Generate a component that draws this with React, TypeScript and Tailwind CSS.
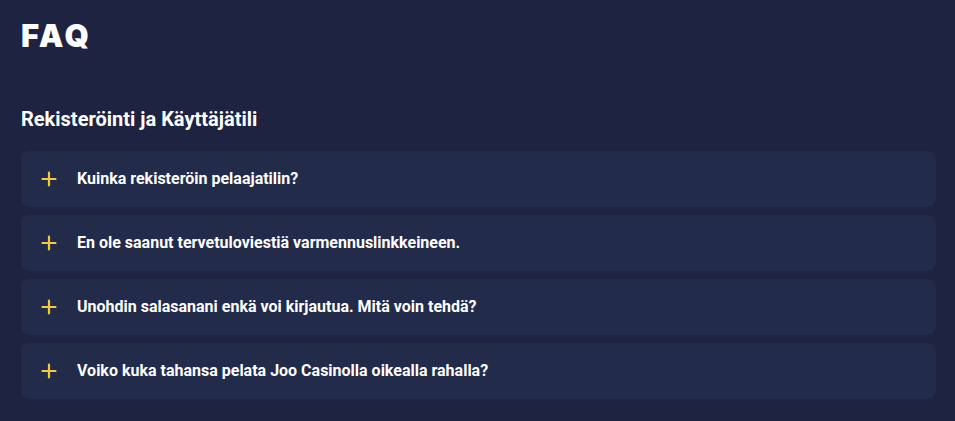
const questions = [
  "Kuinka rekisteröin pelaajatilin?",
  "En ole saanut tervetuloviestiä varmennuslinkkeineen.",
  "Unohdin salasanani enkä voi kirjautua. Mitä voin tehdä?",
  "Voiko kuka tahansa pelata Joo Casinolla oikealla rahalla?",
];

function PlusIcon() {
  return (
    <svg width="16" height="16" viewBox="0 0 16 16" aria-hidden>
      <path d="M8 1.5v13M1.5 8h13" stroke="#f3c845" strokeWidth="2.2" strokeLinecap="round" />
    </svg>
  );
}

export default function App() {
  return (
    <div className="min-h-[421px] w-full bg-[#1d2340] px-[21px] pt-[16px] pb-6 font-['Roboto',sans-serif] text-white">
      <h1 className="font-['Inter',sans-serif] text-[31px] font-black leading-[40px] tracking-[0.08em]">FAQ</h1>
      <h2 className="mt-[51px] text-[20px] font-bold leading-6">Rekisteröinti ja Käyttäjätili</h2>
      <div className="mt-[20px] mr-[-2px] flex flex-col gap-2">
        {questions.map((q) => (
          <button
            key={q}
            className="flex h-14 items-center gap-[20px] rounded-lg bg-[#232b4a] pl-[20px] text-left text-[16px] font-bold"
          >
            <PlusIcon />
            <span>{q}</span>
          </button>
        ))}
      </div>
    </div>
  );
}
